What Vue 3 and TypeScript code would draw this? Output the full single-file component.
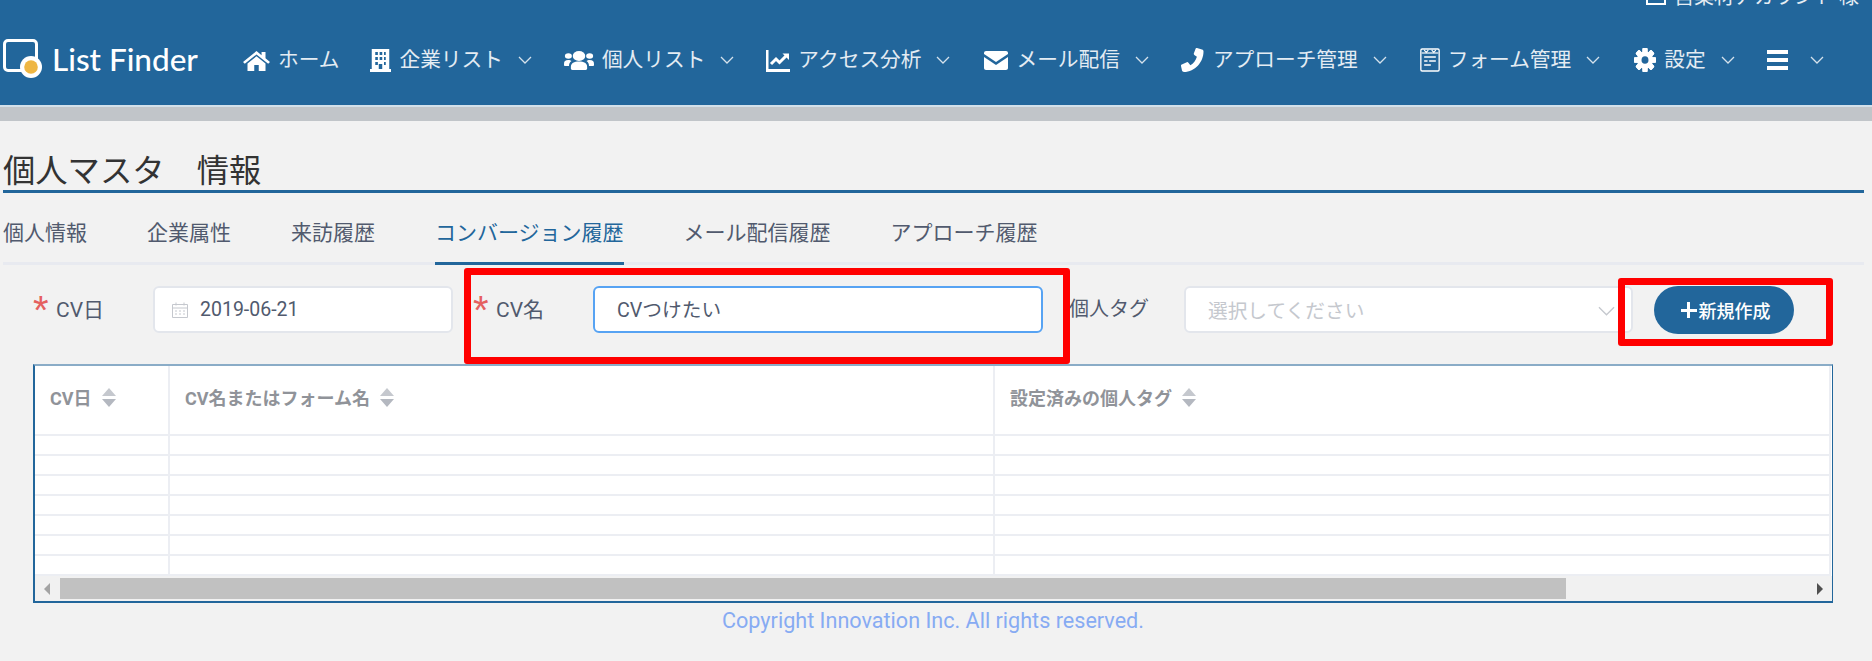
<script setup lang="ts">
type NavItem = { label: string; icon: string; width: number; caret: boolean; gap: number };

const navItems: NavItem[] = [
  { label: 'ホーム', icon: 'home', width: 27, caret: false, gap: 31 },
  { label: '企業リスト', icon: 'building', width: 21, caret: true, gap: 32 },
  { label: '個人リスト', icon: 'users', width: 30, caret: true, gap: 32 },
  { label: 'アクセス分析', icon: 'chart', width: 24, caret: true, gap: 34 },
  { label: 'メール配信', icon: 'mail', width: 24, caret: true, gap: 32 },
  { label: 'アプローチ管理', icon: 'phone', width: 24, caret: true, gap: 33 },
  { label: 'フォーム管理', icon: 'form', width: 20, caret: true, gap: 34 },
  { label: '設定', icon: 'gear', width: 22, caret: true, gap: 32 },
];

const tabs = ['個人情報', '企業属性', '来訪履歴', 'コンバージョン履歴', 'メール配信履歴', 'アプローチ履歴'];
const activeTab = 3;
const rows = Array.from({ length: 7 });
const gearTeeth = [0, 45, 90, 135, 180, 225, 270, 315];
</script>

<template>
  <div class="page">
    <header class="topbar">
      <div class="account">
        <svg class="account-icon" viewBox="0 0 20 16"><rect x="1" y="1" width="18" height="14" fill="none" stroke="#fff" stroke-width="2" /></svg>
        <span>営業材アカウント 様</span>
      </div>
      <div class="logo">
        <svg class="logo-mark" viewBox="0 0 40 40">
          <rect x="1.500" y="1.500" width="32" height="30" rx="3.500" fill="none" stroke="#fff" stroke-width="3" />
          <circle cx="28" cy="28" r="11" fill="#fff" />
          <circle cx="28" cy="28" r="6.800" fill="#eeb643" />
        </svg>
        <span class="logo-text">List Finder</span>
      </div>
      <nav class="nav">
        <a v-for="item in navItems" :key="item.label" class="nav-item" :style="{ marginRight: item.gap + 'px' }">
          <svg class="nav-icon" :style="{ width: item.width + 'px' }" viewBox="0 0 24 24" preserveAspectRatio="none">
            <path v-if="item.icon === 'home'" fill="#fff" d="M12 3 0 14l1.600 1.800L12 6.400l10.400 9.400L24 14l-4-3.700V4h-3.500v3.200zM4 15.500V23h6v-6h4v6h6v-7.500L12 8.300z" />
            <path v-else-if="item.icon === 'building'" fill="#fff" fill-rule="evenodd" d="M2 1h20v20h2v3H0v-3h2zM6 4v3h3V4zm5 0v3h3V4zm5 0v3h2V4zM6 9v3h3V9zm5 0v3h3V9zm5 0v3h2V9zM6 14v3h3v-3zm10 0v3h2v-3zm-6 2v5h4v-5z" />
            <g v-else-if="item.icon === 'users'" fill="#fff">
              <circle cx="12" cy="8" r="5" />
              <circle cx="3.500" cy="8" r="2.800" />
              <circle cx="20.500" cy="8" r="2.800" />
              <path d="M5.500 19c0-4 2.500-5.500 6.500-5.500s6.500 1.500 6.500 5.500v1.500c0 1-1 1.500-2 1.500h-9c-1 0-2-.5-2-1.500z" />
              <path d="M0 16c0-3 1-4 3.500-4 1 0 2 .5 2.500 1-1.500 1-2 3-2 5H1c-.6 0-1-.4-1-1zM24 16c0-3-1-4-3.500-4-1 0-2 .5-2.500 1 1.500 1 2 3 2 5h3c.6 0 1-.4 1-1z" />
            </g>
            <g v-else-if="item.icon === 'chart'">
              <path fill="#fff" d="M0 2h2.500v19H24v3H0z" />
              <path fill="none" stroke="#fff" stroke-width="3" d="M5 16l5-5 3.500 3.500L20 8" />
              <path fill="#fff" d="M16.500 5.500H23V12z" />
            </g>
            <g v-else-if="item.icon === 'mail'" fill="#fff">
              <path d="M2 3h20c1.100 0 2 .9 2 2v1l-12 8L0 6V5c0-1.100.9-2 2-2z" />
              <path d="M0 9v11c0 1.100.9 2 2 2h20c1.100 0 2-.9 2-2V9l-12 8z" />
            </g>
            <path v-else-if="item.icon === 'phone'" fill="#fff" d="M16 0l5 1.500c1 .3 1.500 1 1.500 2C22.500 14 14 24 3 24c-1 0-1.800-.5-2-1.400L0 18c-.2-.7.200-1.300.8-1.600l5-2.200c.6-.2 1.200 0 1.600.5l2 2.500c3-1.500 5.500-5 6.500-8.500l-2.600-1.700c-.5-.4-.7-1-.5-1.600L14.500 1c.2-.7.800-1.200 1.500-1z" />
            <g v-else-if="item.icon === 'form'" fill="none" stroke="#fff">
              <rect x="1" y="1" width="22" height="22" rx="1.500" stroke-width="1.600" />
              <path stroke-width="1.200" d="M2 5h20" />
              <path stroke-width="1.200" d="M5 2l2.500 2.500L10 2M14 2l2.500 2.500L19 2" />
              <path stroke-width="1.600" d="M5 9h14M5 13h4M11 13h8M5 17h8" />
            </g>
            <g v-else-if="item.icon === 'gear'" fill="#fff">
              <rect v-for="deg in gearTeeth" :key="deg" x="9.200" y="0" width="5.600" height="24" rx="1" :transform="`rotate(${deg} 12 12)`" />
              <circle cx="12" cy="12" r="6.300" fill="none" stroke="#fff" stroke-width="5" />
              <circle cx="12" cy="12" r="3.800" fill="#22669b" />
            </g>
          </svg>
          <span class="nav-label">{{ item.label }}</span>
          <svg v-if="item.caret" class="caret" viewBox="0 0 14 8"><path d="M1 1l6 6 6-6" fill="none" stroke="#d5e2ec" stroke-width="1.300" /></svg>
        </a>
        <a class="nav-item menu-item">
          <svg class="nav-icon bars" viewBox="0 0 21 21"><path fill="#fff" d="M0 0h21v4H0zM0 8h21v4H0zM0 16h21v4H0z" /></svg>
          <svg class="caret" viewBox="0 0 14 8"><path d="M1 1l6 6 6-6" fill="none" stroke="#d5e2ec" stroke-width="1.300" /></svg>
        </a>
      </nav>
    </header>
    <div class="band"></div>

    <main class="content">
      <h1 class="title">個人マスタ　情報</h1>
      <ul class="tabs">
        <li v-for="(tab, i) in tabs" :key="tab" class="tab" :class="{ active: i === activeTab }">{{ tab }}</li>
      </ul>

      <div class="form-row">
        <div class="field date-field">
          <span class="label"><i class="req">*</i>CV日</span>
          <div class="input date-input">
            <svg class="cal" viewBox="0 0 18 18"><path fill="none" stroke="#c5c8ce" d="M1.500 3.500h15v13h-15zM1.500 7h15M5 1.500v3M13 1.500v3M4 10h2M8 10h2M12 10h2M4 13h2M8 13h2M12 13h2" /></svg>
            <span>2019-06-21</span>
          </div>
        </div>
        <div class="field name-field">
          <span class="label"><i class="req">*</i>CV名</span>
          <div class="input name-input">CVつけたい</div>
        </div>
        <div class="field tag-field">
          <span class="label plain">個人タグ</span>
          <div class="input select">
            <span>選択してください</span>
            <svg class="select-caret" viewBox="0 0 18 10"><path d="M1 1l8 8 8-8" fill="none" stroke="#c5c8ce" stroke-width="1.400" /></svg>
          </div>
        </div>
        <button class="create-btn"><span class="plus"></span>新規作成</button>
      </div>

      <section class="table-box">
        <div class="row head-row">
          <div class="cell col-date">CV日<i class="sort"><b></b><b></b></i></div>
          <div class="cell col-name">CV名またはフォーム名<i class="sort"><b></b><b></b></i></div>
          <div class="cell col-tag">設定済みの個人タグ<i class="sort"><b></b><b></b></i></div>
        </div>
        <div v-for="(_, i) in rows" :key="i" class="row body-row">
          <div class="cell col-date"></div>
          <div class="cell col-name"></div>
          <div class="cell col-tag"></div>
        </div>
        <div class="scrollbar">
          <i class="arrow left"></i>
          <div class="thumb"></div>
          <i class="arrow right"></i>
        </div>
      </section>

      <footer class="copyright">Copyright Innovation Inc. All rights reserved.</footer>
    </main>

    <!-- annotation boxes drawn over the capture -->
    <div class="mark mark-name"></div>
    <div class="mark mark-btn"></div>
  </div>
</template>

<style>
html, body { margin: 0; background: #f2f2f2; overflow: hidden; }
</style>

<style scoped>
.page {
  position: relative;
  width: 1872px;
  height: 661px;
  overflow: hidden;
  background: #f2f2f2;
  font-family: Roboto, "Noto Sans CJK JP", sans-serif;
  color: #515a6e;
}

.topbar {
  position: relative;
  height: 105px;
  display: flex;
  align-items: center;
  padding-top: 15px;
  box-sizing: border-box;
  background: #22669b;
  color: #fff;
}

.account {
  position: absolute;
  top: -15px;
  left: 1646px;
  display: flex;
  align-items: center;
  gap: 8px;
  font-size: 20px;
  line-height: 24px;
  color: #e6edf3;
  white-space: nowrap;
}

.account-icon { width: 20px; height: 18px; }

.logo {
  display: flex;
  align-items: center;
  width: 243px;
  flex: none;
  padding-left: 3px;
  box-sizing: border-box;
}

.logo-mark { width: 40px; height: 40px; flex: none; margin-top: -2px; }

.logo-text {
  margin: -3px 0 0 9px;
  font-family: Lato, sans-serif;
  font-size: 31.500px;
  font-weight: 500;
  color: #fff;
  white-space: nowrap;
}

.nav { display: flex; align-items: center; }

.nav-item { display: flex; align-items: center; white-space: nowrap; }

.nav-icon { height: 24px; flex: none; }

.nav-label {
  margin-left: 8px;
  font-size: 20.700px;
  line-height: 28px;
  color: #e4ecf3;
}

.caret { width: 14px; height: 8px; margin-left: 15px; flex: none; }

.bars { width: 21px; height: 21px; }

.menu-item .caret { margin-left: 22px; }

.band {
  height: 16px;
  box-sizing: border-box;
  background: #c1c5c9;
  border-top: 2px solid #d3e0ea;
}

.content { padding: 0 8px 0 3px; }

.title {
  margin: 0;
  height: 72px;
  box-sizing: border-box;
  padding-top: 30px;
  font-size: 32.300px;
  line-height: 40px;
  font-weight: 400;
  color: #333;
  border-bottom: 3px solid #22669b;
}

.tabs {
  display: flex;
  gap: 60px;
  margin: 0;
  padding: 0;
  list-style: none;
  height: 72px;
  box-sizing: border-box;
  border-bottom: 3px solid #e8eaf0;
}

.tab {
  height: 72px;
  box-sizing: border-box;
  padding-top: 25px;
  font-size: 21px;
  line-height: 30px;
  color: #515a6e;
}

.tab.active {
  color: #22669b;
  border-bottom: 3px solid #22669b;
}

.form-row {
  display: flex;
  align-items: flex-start;
  height: 99px;
  box-sizing: border-box;
  padding: 21px 0 0 31px;
}

.field { display: flex; align-items: flex-start; }

.label {
  display: flex;
  align-items: center;
  height: 43px;
  font-size: 21px;
  color: #515a6e;
  white-space: nowrap;
}

.req {
  font-style: normal;
  color: #e5605f;
  font-size: 40px;
  line-height: 43px;
  width: 23px;
  font-family: "Liberation Sans", sans-serif;
  margin: 6px 0 0 -1px;
}

.input {
  height: 47px;
  box-sizing: border-box;
  display: flex;
  align-items: center;
  background: #fff;
  border: 2px solid #e3e6ec;
  border-radius: 6px;
  font-size: 19.500px;
  color: #515a6e;
}

.date-field .label { width: 119px; }
.date-input { width: 300px; padding-left: 16px; }
.cal { width: 18px; height: 18px; margin-right: 11px; flex: none; }

.name-field { margin-left: 21px; }
.name-field .label { width: 119px; }
.name-input {
  width: 450px;
  padding: 0 0 2px 22px;
  border-color: #57a3f3;
  font-size: 19.700px;
}

.tag-field { margin-left: 26px; }
.label.plain { width: 115px; font-size: 20px; }
.select {
  position: relative;
  width: 449px;
  padding-left: 22px;
  font-size: 19.700px;
  color: #c5c8ce;
}
.select-caret { position: absolute; right: 16px; top: 18px; width: 17px; height: 10px; }

.create-btn {
  width: 140px;
  height: 48px;
  margin-left: 21px;
  padding: 0 0 0 3px;
  display: flex;
  align-items: center;
  justify-content: center;
  gap: 2px;
  background: #22669b;
  border: none;
  border-radius: 24px;
  color: #fff;
  font-family: inherit;
  font-size: 18px;
  font-weight: 500;
}

.plus {
  position: relative;
  width: 16px;
  height: 16px;
  flex: none;
  background:
    linear-gradient(#fff, #fff) center / 16px 3px no-repeat,
    linear-gradient(#fff, #fff) center / 3px 16px no-repeat;
}

.table-box {
  position: relative;
  width: 1800px;
  height: 239px;
  margin-left: 30px;
  box-sizing: border-box;
  background: #fff;
  border: 2px solid #22669b;
  border-top-color: #8aacc7;
  border-right-width: 1px;
  overflow: hidden;
}

.row { display: flex; box-sizing: border-box; }

.head-row { height: 70px; }
.body-row { height: 20px; }

.cell {
  box-sizing: border-box;
  border-bottom: 2px solid #eceef3;
  border-right: 2px solid #eceef3;
}

.head-row .cell {
  display: flex;
  align-items: center;
  font-size: 18px;
  font-weight: 700;
  color: #909399;
  padding-bottom: 6px;
}

.col-date { width: 135px; flex: none; padding-left: 15px; }
.col-name { width: 825px; flex: none; padding-left: 15px; }
.col-tag { width: 836px; flex: none; padding-left: 15px; }

.sort {
  display: flex;
  flex-direction: column;
  gap: 3px;
  margin-left: 10px;
}

.sort b {
  width: 0;
  height: 0;
  border-left: 7px solid transparent;
  border-right: 7px solid transparent;
  border-bottom: 8px solid #c5c8ce;
}

.sort b + b {
  border-bottom: none;
  border-top: 8px solid #b4b8c0;
}

.scrollbar {
  position: relative;
  height: 25px;
  background: #f1f1f1;
}

.thumb {
  position: absolute;
  left: 25px;
  top: 2px;
  width: 1506px;
  height: 21px;
  background: #c1c1c1;
}

.arrow {
  position: absolute;
  top: 7px;
  width: 0;
  height: 0;
  border-top: 6px solid transparent;
  border-bottom: 6px solid transparent;
}

.arrow.left { left: 9px; border-right: 6px solid #a3a3a3; }
.arrow.right { right: 9px; border-left: 6px solid #505050; }

.copyright {
  margin-top: 4px;
  text-align: center;
  width: 1860px;
  font-size: 21.600px;
  line-height: 28px;
  color: #87abf3;
}

.mark {
  position: absolute;
  box-sizing: border-box;
  border: 7px solid #f00;
  border-radius: 3px;
  pointer-events: none;
}

.mark-name { left: 464px; top: 268px; width: 606px; height: 96px; }
.mark-btn { left: 1618px; top: 278px; width: 215px; height: 68px; }
</style>
